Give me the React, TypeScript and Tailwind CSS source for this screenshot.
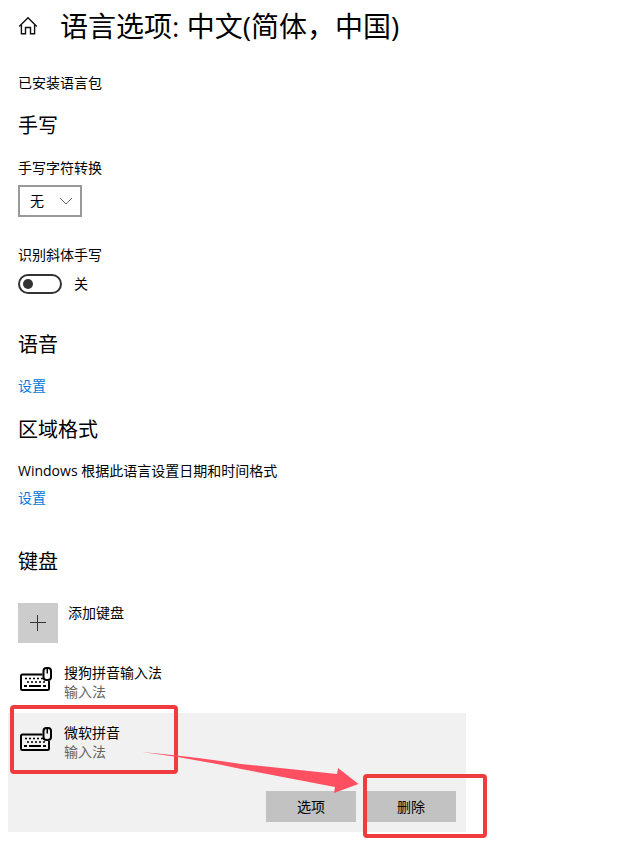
import { useState } from "react";

function HomeIcon() {
  return (
    <svg width="20" height="20" viewBox="0 0 20 20" fill="none" stroke="#111" strokeWidth="1.4" aria-hidden="true">
      <path d="M1.2 10.600 10 1.800l8.800 8.800" />
      <path d="M3.400 8.800v9h4.100v-6.300h5v6.300h4.100v-9" />
    </svg>
  );
}

function KeyboardIcon() {
  return (
    <svg width="32" height="26" viewBox="0 0 32 26" fill="none" stroke="#000" aria-hidden="true">
      <path d="M22.500 7.500H2.500Q1 7.500 1 9V21.500Q1 23 2.500 23H27.500Q29 23 29 21.500V14" strokeWidth="2" />
      <rect x="23.500" y="1" width="7.500" height="12" rx="3" strokeWidth="2" />
      <path d="M27.250 2v4.500" strokeWidth="1.500" />
      <path d="M5 11.500h2M9 11.500h2M13 11.500h2M17 11.500h2M21 11.500h2" strokeWidth="1.600" />
      <path d="M7 15h2M11 15h2M15 15h2M19 15h2M23 15h2" strokeWidth="1.600" />
      <path d="M4 19h3M9 19h12M23 19h3" strokeWidth="1.800" />
    </svg>
  );
}

function KeyboardRow({ name }: { name: string }) {
  return (
    <div className="flex gap-3 px-3 pt-[10px] pb-3">
      <div className="pt-1">
        <KeyboardIcon />
      </div>
      <div className="leading-[19px]">
        <p>{name}</p>
        <p className="text-[#666]">输入法</p>
      </div>
    </div>
  );
}

function Heading({ children }: { children: string }) {
  return <h2 className="text-xl leading-7">{children}</h2>;
}

export default function App() {
  const [handwriting, setHandwriting] = useState(false);

  return (
    <main className="min-h-screen overflow-x-hidden bg-white pb-6 font-['Open_Sans','Noto_Sans_CJK_SC',sans-serif] text-sm leading-5 text-black">
      <div className="px-[18px] pt-2">
        <header className="flex items-center gap-[22px]">
          <a href="#home" aria-label="主页">
            <HomeIcon />
          </a>
          <h1 className="text-[28px] leading-9">语言选项: 中文(简体，中国)</h1>
        </header>

        <p className="mt-[29px]">已安装语言包</p>

        <section className="mt-[19px]">
          <Heading>手写</Heading>
          <label htmlFor="convert" className="mt-[18px] block">
            手写字符转换
          </label>
          <div className="relative mt-[7px] w-16">
            <select
              id="convert"
              className="block h-8 w-full appearance-none border-2 border-[#999] bg-white pl-[10px] outline-none"
            >
              <option>无</option>
            </select>
            <svg
              className="pointer-events-none absolute top-3 right-[9px]"
              width="14"
              height="8"
              viewBox="0 0 14 8"
              fill="none"
              stroke="#666"
              aria-hidden="true"
            >
              <path d="m1 1 6 6 6-6" />
            </svg>
          </div>
          <label htmlFor="cursive" className="mt-7 block">
            识别斜体手写
          </label>
          <div className="mt-[9px] flex items-center gap-3">
            <input
              id="cursive"
              type="checkbox"
              role="switch"
              checked={handwriting}
              onChange={(event) => setHandwriting(event.target.checked)}
              className="flex h-5 w-11 appearance-none items-center rounded-full border-2 border-[#333] px-[3px] before:size-[10px] before:rounded-full before:bg-[#333] checked:justify-end"
            />
            <span>{handwriting ? "开" : "关"}</span>
          </div>
        </section>

        <section className="mt-[37px]">
          <Heading>语音</Heading>
          <a href="#speech" className="mt-[17px] block w-fit text-[#0078d7]">
            设置
          </a>
        </section>

        <section className="mt-5">
          <Heading>区域格式</Heading>
          <p className="mt-[17px]">Windows 根据此语言设置日期和时间格式</p>
          <a href="#region" className="mt-[7px] block w-fit text-[#0078d7]">
            设置
          </a>
        </section>

        <section className="mt-10">
          <Heading>键盘</Heading>
          <button type="button" className="mt-[27px] flex gap-[10px] text-left">
            <span className="flex size-10 items-center justify-center bg-[#ccc]">
              <svg width="16" height="16" viewBox="0 0 16 16" stroke="#333" aria-hidden="true">
                <path d="M7.500 0v16M0 7.500h16" />
              </svg>
            </span>
            <span>添加键盘</span>
          </button>
        </section>
      </div>

      <div className="mx-2 mt-[10px] max-w-[458px]">
        <KeyboardRow name="搜狗拼音输入法" />
        <div className="relative bg-[#f1f1f1]">
          <KeyboardRow name="微软拼音" />
          <div className="mt-[18px] flex justify-end gap-[10px] px-[10px] pb-[10px]">
            <button type="button" className="h-[31px] w-[90px] bg-[#c2c2c2]">
              选项
            </button>
            <button type="button" className="h-[31px] w-[90px] bg-[#c2c2c2]">
              删除
            </button>
          </div>

          {/* highlight boxes and the arrow between them */}
          <div className="pointer-events-none absolute -top-2 left-[2px] h-[69px] w-[168px] rounded border-4 border-[#f03c3f]" />
          <div className="pointer-events-none absolute -right-[21px] -bottom-[6px] h-16 w-[124px] rounded border-4 border-[#f03c3f]" />
          <svg
            className="pointer-events-none absolute top-[38px] right-[107px]"
            width="218"
            height="44"
            viewBox="0 0 218 44"
            fill="#ff5062"
            aria-hidden="true"
          >
            <path d="M1 1Q55 6 100 13L196 23 197 17 217.500 33 193 42 194 36 100 18Q50 7 1 1Z" />
          </svg>
        </div>
      </div>
    </main>
  );
}
